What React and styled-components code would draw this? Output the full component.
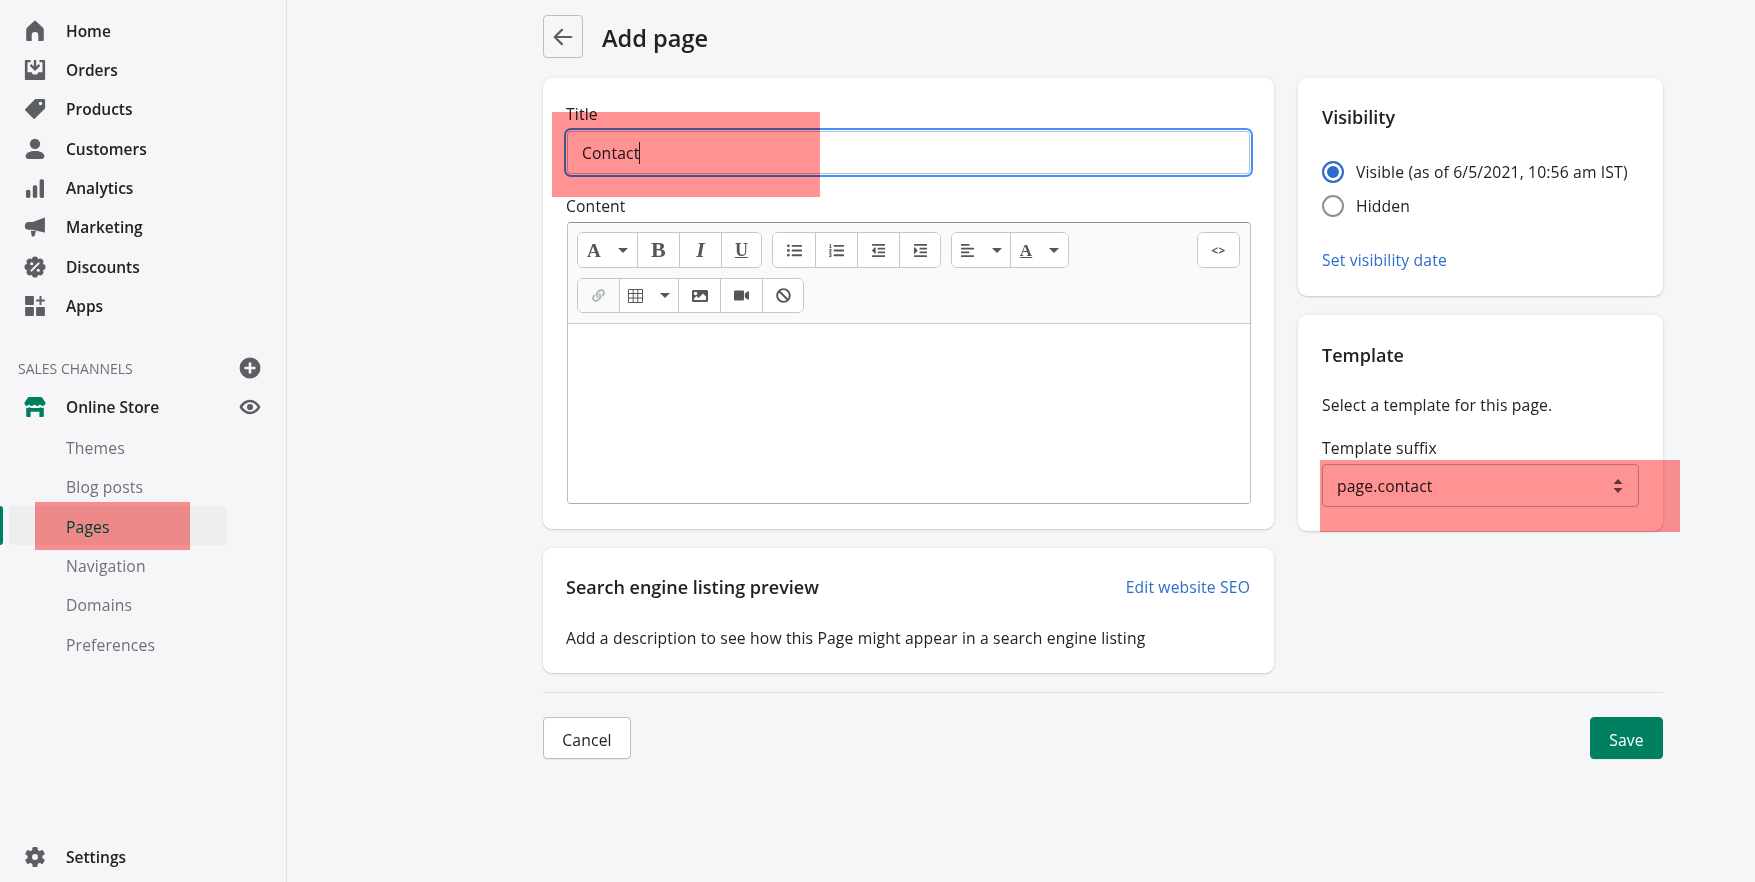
import React from 'react'
import styled, { createGlobalStyle } from 'styled-components'
import {
  FaListUl,
  FaListOl,
  FaOutdent,
  FaIndent,
  FaAlignLeft,
  FaLink,
  FaImage,
  FaVideo,
  FaBan,
} from 'react-icons/fa'

const GlobalStyle = createGlobalStyle`
  html, body {
    margin: 0;
    background: #f6f6f8;
  }
  body {
    font-family: "Open Sans", "Noto Sans", sans-serif;
    font-size: 15.7px;
    letter-spacing: 0.15px;
    color: #202223;
  }
  * {
    box-sizing: border-box;
  }
`

const Page = styled.div`
  position: relative;
  display: flex;
  width: 1755px;
  height: 882px;
  overflow: hidden;
`

const Sidebar = styled.nav`
  display: flex;
  flex-direction: column;
  flex: none;
  width: 287px;
  height: 882px;
  padding: 11px 0 5px;
  border-right: 1px solid #e1e3e5;
`

const NavItem = styled.div`
  display: flex;
  align-items: center;
  gap: 20px;
  height: 39.35px;
  padding: 0 25px 0 24px;
  font-weight: 600;
  font-size: 15.5px;
  letter-spacing: 0;
  color: #202223;
`

const IconSlot = styled.span`
  display: flex;
  align-items: center;
  justify-content: center;
  flex: none;
  width: 22px;
  height: 24px;
`

const SubItem = styled.div`
  position: relative;
  display: flex;
  align-items: center;
  height: 39.4px;
  margin: 0 59px 0 9px;
  padding: 2px 0 0 57px;
  border-radius: 4px;
  color: ${(p) => (p.$active ? '#006e52' : '#6d7175')};
  background: ${(p) => (p.$active ? '#edeef0' : 'transparent')};
  &::before {
    content: '';
    display: ${(p) => (p.$active ? 'block' : 'none')};
    position: absolute;
    left: -9px;
    top: 0;
    bottom: 0;
    width: 3px;
    border-radius: 0 3px 3px 0;
    background: #008060;
  }
`

const SectionHead = styled.div`
  display: flex;
  align-items: center;
  justify-content: space-between;
  height: 39px;
  margin-top: 23px;
  padding: 0 25px 0 18px;
  font-size: 14px;
  letter-spacing: 0;
  color: #6d7175;
`

const RowAction = styled.span`
  display: flex;
  margin-left: auto;
`

const SidebarFooter = styled.div`
  margin-top: auto;
`

const Main = styled.main`
  flex: 1;
  padding: 15px 0 0 256px;
`

const Content = styled.div`
  width: 1120px;
`

const Header = styled.header`
  display: flex;
  align-items: center;
  gap: 19px;
  height: 43px;
  margin-bottom: 20px;
`

const BackButton = styled.button`
  display: flex;
  align-items: center;
  justify-content: center;
  width: 40px;
  height: 43px;
  padding: 0;
  border: 1px solid #babfc3;
  border-radius: 4px;
  background: transparent;
`

const PageTitle = styled.h1`
  margin: 2px 0 0;
  font-size: 23.6px;
  font-weight: 600;
  letter-spacing: 0;
  line-height: 28px;
`

const Columns = styled.div`
  display: grid;
  grid-template-columns: 731px 365px;
  gap: 24px;
  align-items: start;
`

const Stack = styled.div`
  display: flex;
  flex-direction: column;
  gap: 19px;
`

const Card = styled.section`
  padding: ${(p) => p.$pad || '27px 24px 25px'};
  border-radius: 9px;
  background: #fff;
  box-shadow: 0 0 5px rgba(23, 24, 24, 0.05), 0 1px 2px rgba(0, 0, 0, 0.15);
`

const Label = styled.div`
  height: 21px;
  line-height: 21px;
`

const TitleInput = styled.div`
  display: flex;
  align-items: center;
  width: 683px;
  height: 43px;
  margin: 6px 0 22px 1px;
  padding-left: 14px;
  border: 1px solid #babfc3;
  border-radius: 4px;
  outline: 2px solid #458fff;
  outline-offset: 1px;
`

const Caret = styled.span`
  width: 1px;
  height: 22px;
  background: #202223;
`

const Editor = styled.div`
  display: flex;
  flex-direction: column;
  height: 282px;
  margin: 5px 0 0 1px;
  border: 1px solid #babfc3;
  border-top-color: #8c9196;
  border-bottom-color: #a9acaf;
  border-radius: 4px;
  overflow: hidden;
`

const Toolbar = styled.div`
  display: flex;
  flex-direction: column;
  gap: 10px;
  height: 101px;
  padding: 9px 10px 0 9px;
  border-bottom: 1px solid #c9cccf;
  background: #f9fafa;
`

const ToolRow = styled.div`
  display: flex;
  gap: 10px;
`

const ToolGroup = styled.div`
  display: flex;
  height: ${(p) => p.$h || 36}px;
  margin-left: ${(p) => (p.$end ? 'auto' : '0')};
  border: 1px solid #c4c8cb;
  border-radius: 6px;
  background: #fff;
  overflow: hidden;
`

const ToolButton = styled.div`
  display: flex;
  align-items: center;
  justify-content: center;
  gap: 17px;
  flex: none;
  width: ${(p) => p.$w || 42}px;
  color: ${(p) => (p.$off ? '#b5b8bb' : '#54575a')};
  background: ${(p) => (p.$off ? '#f9fafa' : '#fff')};
  & + & {
    border-left: 1px solid #c4c8cb;
  }
`

const Glyph = styled.span`
  font-family: "Liberation Serif", serif;
  font-size: ${(p) => p.$size || 19}px;
  font-weight: 700;
  font-style: ${(p) => (p.$italic ? 'italic' : 'normal')};
  text-decoration: ${(p) => (p.$under ? 'underline' : 'none')};
  line-height: 1;
`

const CodeGlyph = styled.span`
  font-size: 12px;
  font-weight: 700;
  letter-spacing: 0.5px;
`

const Triangle = styled.span`
  width: 0;
  height: 0;
  border-left: 5.5px solid transparent;
  border-right: 5.5px solid transparent;
  border-top: 5.5px solid #54575a;
`

const EditorBody = styled.div`
  flex: 1;
  background: #fff;
`

const CardTitle = styled.h2`
  margin: 0;
  font-size: 18px;
  font-weight: 600;
  letter-spacing: 0;
  line-height: 24px;
`

const CardHead = styled.div`
  display: flex;
  align-items: center;
  justify-content: space-between;
  padding-right: 1px;
`

const BodyText = styled.p`
  height: 22px;
  margin: ${(p) => p.$top || 0}px 0 0;
  line-height: 22px;
`

const TextLink = styled.a`
  display: block;
  margin-top: ${(p) => p.$top || 0}px;
  line-height: 22px;
  color: #2c6ecb;
`

const RadioList = styled.div`
  margin-top: 26px;
`

const RadioRow = styled.label`
  display: flex;
  align-items: center;
  gap: 12px;
  height: 34px;
`

const RadioDot = styled.span`
  flex: none;
  width: 22px;
  height: 22px;
  border-radius: 50%;
  border: 2px solid ${(p) => (p.$on ? '#2c6ecb' : '#8c9196')};
  background: ${(p) => (p.$on ? '#2c6ecb' : '#fff')};
  box-shadow: inset 0 0 0 ${(p) => (p.$on ? 3 : 0)}px #fff;
`

const SelectBox = styled.div`
  display: flex;
  align-items: center;
  justify-content: space-between;
  height: 43px;
  margin-top: 5px;
  padding: 0 14px;
  border: 1px solid #babfc3;
  border-radius: 4px;
`

const Divider = styled.hr`
  margin: 19px 0 24px;
  border: 0;
  border-top: 1px solid #dfe1e4;
`

const Actions = styled.div`
  display: flex;
  justify-content: space-between;
`

const Button = styled.button`
  height: 42px;
  width: ${(p) => p.$w}px;
  padding: 3px 0 0;
  border: 1px solid ${(p) => (p.$primary ? '#008060' : '#babfc3')};
  border-radius: 4px;
  font-family: inherit;
  font-size: 15.7px;
  font-weight: ${(p) => (p.$primary ? 500 : 400)};
  letter-spacing: inherit;
  color: ${(p) => (p.$primary ? '#fff' : '#202223')};
  background: ${(p) => (p.$primary ? '#008060' : '#fff')};
  box-shadow: 0 1px 0 rgba(0, 0, 0, 0.05);
`

const Highlight = styled.div`
  position: absolute;
  left: ${(p) => p.$x}px;
  top: ${(p) => p.$y}px;
  width: ${(p) => p.$w}px;
  height: ${(p) => p.$h}px;
  background: #ff9292;
  mix-blend-mode: multiply;
  pointer-events: none;
`

const Icon = ({ children, color = '#5c5f62', size = 22 }) => (
  <svg width={size} height={size} viewBox="0 0 20 20" fill={color} fillRule="evenodd">
    {children}
  </svg>
)

const HomeIcon = () => (
  <Icon>
    <path d="M10 .5a1 1 0 0 1 .7.3L16.600 6.400c.9.8 1.400 1.600 1.400 2.800V18a1.200 1.200 0 0 1-1.200 1.200H13V14a3 3 0 0 0-6 0v5.200H3.200A1.200 1.200 0 0 1 2 18V9.200c0-1.200.5-2 1.400-2.800L9.300.8A1 1 0 0 1 10 .5z" />
  </Icon>
)

const OrdersIcon = () => (
  <Icon>
    <path d="M1.800.8H6v2.200H3.200V12H7l1 2h4l1-2h3.800V3H14V.8h4.200c.6 0 1 .4 1 1v16.400c0 .6-.4 1-1 1H1.800c-.6 0-1-.4-1-1V1.800c0-.6.4-1 1-1z" />
    <path d="M8.900.8h2.200v6l2.200-2.200 1.500 1.500L10 10.900 5.200 6.100l1.500-1.500 2.200 2.200z" />
  </Icon>
)

const TagIcon = () => (
  <Icon>
    <path d="M11 .8h7.200c.6 0 1 .4 1 1V9c0 .3-.1.5-.3.700l-9 9c-.4.400-1 .400-1.400 0L1.200 11.400c-.4-.4-.4-1 0-1.400l9-9c.2-.1.500-.2.800-.2zM15 3.400a1.600 1.600 0 1 0 0 3.200 1.600 1.600 0 0 0 0-3.200z" />
  </Icon>
)

const PersonIcon = () => (
  <Icon>
    <circle cx="10" cy="5.300" r="4.700" />
    <path d="M1.500 16.700c0-3.400 4-4.900 8.500-4.900s8.500 1.500 8.500 4.900c0 1.400-1 2.500-2.500 2.500H4c-1.500 0-2.500-1.100-2.500-2.500z" />
  </Icon>
)

const BarsIcon = () => (
  <Icon>
    <rect x="1.800" y="11.500" width="4" height="7.500" rx="1.500" />
    <rect x="8" y="7.500" width="4" height="11.500" rx="1.500" />
    <rect x="14.200" y="2" width="4" height="17" rx="1.500" />
  </Icon>
)

const MegaphoneIcon = () => (
  <Icon>
    <path d="M18.300 1.500c.4-.2.700.1.700.5v12.500c0 .4-.3.700-.7.500L8 12.500H4.300a3.500 3.500 0 0 1 0-7H8z" />
    <path d="M6.300 13.500h4.600l-1 4c-.2.700-.7 1.100-1.400 1.100h-.5c-.7 0-1.100-.4-1.200-1.100z" />
  </Icon>
)

const badgeLobes = [0, 45, 90, 135, 180, 225, 270, 315]

const BadgeIcon = () => (
  <Icon size={24}>
    <circle cx="10" cy="10" r="7.800" />
    {badgeLobes.map((a) => (
      <circle key={a} cx="10" cy="3.200" r="2.800" transform={`rotate(${a} 10 10)`} />
    ))}
    <path d="M6.700 13.300l6.600-6.600" stroke="#f6f6f8" strokeWidth="1.900" strokeLinecap="round" />
    <circle cx="7" cy="7" r="1.400" fill="#f6f6f8" />
    <circle cx="13" cy="13" r="1.400" fill="#f6f6f8" />
  </Icon>
)

const AppsIcon = () => (
  <Icon>
    <rect x="1" y="1" width="8" height="8" rx=".8" />
    <rect x="1" y="11" width="8" height="8" rx=".8" />
    <rect x="11" y="11" width="8" height="8" rx=".8" />
    <path d="M14.100 1h1.800v3.100H19v1.800h-3.100V9h-1.800V5.900H11V4.100h3.100z" />
  </Icon>
)

const StoreIcon = () => (
  <Icon color="#007f5f">
    <path d="M4.500.8h11c.4 0 .7.200.9.500l3.100 4.700c.3 1.900-1 3-2.500 3-1 0-1.900-.4-2.500-1.200-.6.800-1.500 1.200-2.500 1.200s-1.900-.4-2.500-1.200C8.900 8.600 8 9 7 9s-1.900-.4-2.500-1.200C3.900 8.600 3 9 2.500 9 1.500 9 .2 7.900.5 6l3.100-4.700c.2-.3.500-.5.900-.5z" />
    <path d="M2 10.700c1 .2 2 .1 2.800-.4.700.5 1.400.7 2.200.7h6c.8 0 1.500-.2 2.200-.7.800.5 1.800.6 2.800.4V18c0 .7-.5 1.200-1.200 1.200H14V14.300H6v4.900H3.200C2.500 19.200 2 18.700 2 18z" />
  </Icon>
)

const gearTeeth = [0, 60, 120, 180, 240, 300]

const GearIcon = () => (
  <Icon size={24}>
    <circle cx="10" cy="10" r="6.800" />
    {gearTeeth.map((a) => (
      <rect key={a} x="7.600" y=".8" width="4.800" height="5" rx="1.200" transform={`rotate(${a} 10 10)`} />
    ))}
    <circle cx="10" cy="10" r="2.700" fill="#f6f6f8" />
  </Icon>
)

const PlusCircle = () => (
  <Icon>
    <path d="M10 .5a9.500 9.500 0 1 1 0 19 9.500 9.500 0 0 1 0-19zM8.800 5v3.800H5v2.400h3.800V15h2.400v-3.800H15V8.800h-3.800V5z" />
  </Icon>
)

const EyeIcon = () => (
  <Icon>
    <path d="M10 3.500c5 0 8.500 4 9.500 6.500-1 2.500-4.500 6.500-9.500 6.500S1.500 12.500.5 10C1.500 7.500 5 3.500 10 3.500zm0 2.200c-3.200 0-5.800 2.500-6.900 4.300 1.100 1.800 3.700 4.300 6.900 4.300s5.800-2.500 6.900-4.300C15.800 8.200 13.200 5.700 10 5.700z" />
    <circle cx="10" cy="10" r="2.800" />
  </Icon>
)

const BackArrow = () => (
  <svg width="22" height="22" viewBox="0 0 20 20" fill="none" stroke="#5c5f62" strokeWidth="2" strokeLinecap="round" strokeLinejoin="round">
    <path d="M17.500 10h-15M9 3.500 2.500 10 9 16.500" />
  </svg>
)

const SelectArrows = () => (
  <svg width="12" height="18" viewBox="0 0 12 18" fill="#5c5f62">
    <path d="M6 2l4.500 5h-9zM6 16l-4.500-5h9z" />
  </svg>
)

const TableIcon = () => (
  <svg width="15" height="14" viewBox="0 0 15 14" fill="none" stroke="#54575a" strokeWidth="1">
    <path d="M.5.5h14v13H.5zM.5 4.500h14M.5 9h14M5.200.5v13M9.800.5v13" />
  </svg>
)

const primaryNav = [
  ['Home', HomeIcon],
  ['Orders', OrdersIcon],
  ['Products', TagIcon],
  ['Customers', PersonIcon],
  ['Analytics', BarsIcon],
  ['Marketing', MegaphoneIcon],
  ['Discounts', BadgeIcon],
  ['Apps', AppsIcon],
]

const storeNav = ['Themes', 'Blog posts', 'Pages', 'Navigation', 'Domains', 'Preferences']

const App = () => (
  <Page>
    <GlobalStyle />
    <Sidebar>
      {primaryNav.map(([label, NavIcon]) => (
        <NavItem key={label}>
          <IconSlot><NavIcon /></IconSlot>
          {label}
        </NavItem>
      ))}
      <SectionHead>
        SALES CHANNELS
        <PlusCircle />
      </SectionHead>
      <NavItem>
        <IconSlot><StoreIcon /></IconSlot>
        Online Store
        <RowAction>
          <EyeIcon />
        </RowAction>
      </NavItem>
      {storeNav.map((label) => (
        <SubItem key={label} $active={label === 'Pages'}>
          {label}
        </SubItem>
      ))}
      <SidebarFooter>
        <NavItem>
          <IconSlot><GearIcon /></IconSlot>
          Settings
        </NavItem>
      </SidebarFooter>
    </Sidebar>

    <Main>
      <Content>
        <Header>
          <BackButton aria-label="Back">
            <BackArrow />
          </BackButton>
          <PageTitle>Add page</PageTitle>
        </Header>

        <Columns>
          <Stack>
            <Card $pad="26px 23px 25px">
              <Label>Title</Label>
              <TitleInput>
                Contact
                <Caret />
              </TitleInput>
              <Label>Content</Label>
              <Editor>
                <Toolbar>
                  <ToolRow>
                    <ToolGroup>
                      <ToolButton $w={59}>
                        <Glyph>A</Glyph>
                        <Triangle />
                      </ToolButton>
                      <ToolButton>
                        <Glyph $size={22}>B</Glyph>
                      </ToolButton>
                      <ToolButton>
                        <Glyph $italic $size={22}>I</Glyph>
                      </ToolButton>
                      <ToolButton $w={40}>
                        <Glyph $under $size={18}>U</Glyph>
                      </ToolButton>
                    </ToolGroup>
                    <ToolGroup>
                      <ToolButton><FaListUl size={15} /></ToolButton>
                      <ToolButton><FaListOl size={15} /></ToolButton>
                      <ToolButton><FaOutdent size={15} /></ToolButton>
                      <ToolButton $w={41}><FaIndent size={15} /></ToolButton>
                    </ToolGroup>
                    <ToolGroup>
                      <ToolButton $w={58}>
                        <FaAlignLeft size={15} />
                        <Triangle />
                      </ToolButton>
                      <ToolButton $w={58}>
                        <Glyph $under $size={17}>A</Glyph>
                        <Triangle />
                      </ToolButton>
                    </ToolGroup>
                    <ToolGroup $end>
                      <ToolButton $w={41}>
                        <CodeGlyph>&lt;&gt;</CodeGlyph>
                      </ToolButton>
                    </ToolGroup>
                  </ToolRow>
                  <ToolRow>
                    <ToolGroup $h={35}>
                      <ToolButton $w={41} $off><FaLink size={13} /></ToolButton>
                      <ToolButton $w={59}>
                        <TableIcon />
                        <Triangle />
                      </ToolButton>
                      <ToolButton><FaImage size={16} /></ToolButton>
                      <ToolButton><FaVideo size={15} /></ToolButton>
                      <ToolButton $w={41}><FaBan size={15} /></ToolButton>
                    </ToolGroup>
                  </ToolRow>
                </Toolbar>
                <EditorBody />
              </Editor>
            </Card>

            <Card $pad="27px 23px 24px">
              <CardHead>
                <CardTitle>Search engine listing preview</CardTitle>
                <TextLink>Edit website SEO</TextLink>
              </CardHead>
              <BodyText $top={28}>Add a description to see how this Page might appear in a search engine listing</BodyText>
            </Card>
          </Stack>

          <Stack>
            <Card>
              <CardTitle>Visibility</CardTitle>
              <RadioList>
                <RadioRow>
                  <RadioDot $on />
                  Visible (as of 6/5/2021, 10:56 am IST)
                </RadioRow>
                <RadioRow>
                  <RadioDot />
                  Hidden
                </RadioRow>
              </RadioList>
              <TextLink $top={26}>Set visibility date</TextLink>
            </Card>

            <Card $pad="28px 24px 24px">
              <CardTitle>Template</CardTitle>
              <BodyText $top={27}>Select a template for this page.</BodyText>
              <BodyText $top={21}>Template suffix</BodyText>
              <SelectBox>
                page.contact
                <SelectArrows />
              </SelectBox>
            </Card>
          </Stack>
        </Columns>

        <Divider />

        <Actions>
          <Button $w={88}>Cancel</Button>
          <Button $w={73} $primary>Save</Button>
        </Actions>
      </Content>
    </Main>

    <Highlight $x={552} $y={112} $w={268} $h={85} />
    <Highlight $x={35} $y={502} $w={155} $h={48} />
    <Highlight $x={1320} $y={460} $w={360} $h={72} />
  </Page>
)

export default App
